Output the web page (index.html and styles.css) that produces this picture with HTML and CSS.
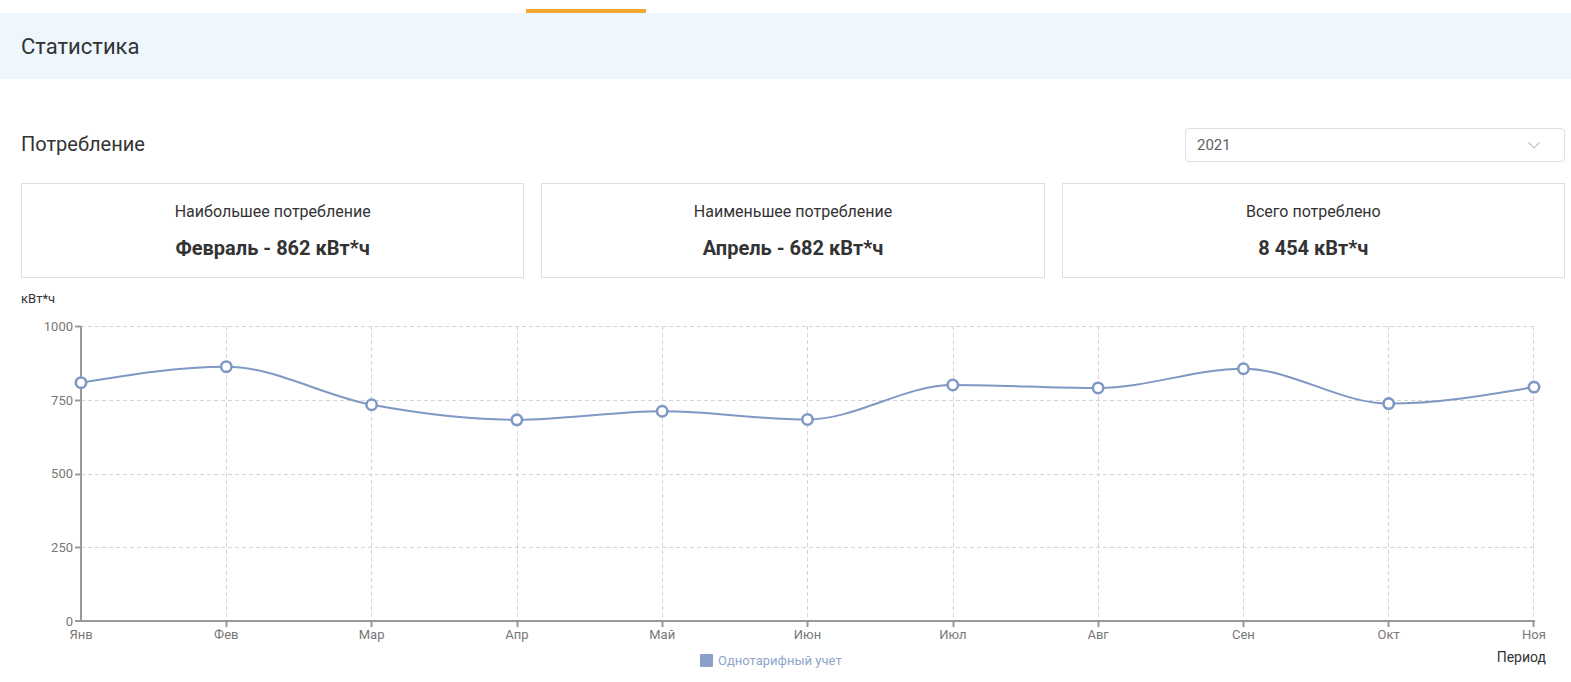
FILE: index.html
```html
<!DOCTYPE html>
<html lang="ru">
<head>
<meta charset="utf-8">
<title>Статистика</title>
<link rel="stylesheet" href="styles.css">
</head>
<body>
<div class="topbar"><div class="tab-indicator"></div></div>
<header class="page-header">Статистика</header>
<main class="content">
  <div class="section-head">
    <h2 class="section-title">Потребление</h2>
    <div class="select">
      <span class="select-value">2021</span>
      <svg class="chevron" width="12" height="7" viewBox="0 0 12 7"><polyline points="0.5,0.5 6,6 11.5,0.5" fill="none" stroke="#c0c4cc" stroke-width="1.2"/></svg>
    </div>
  </div>
  <div class="cards">
    <div class="card">
      <div class="card-label">Наибольшее потребление</div>
      <div class="card-value">Февраль - 862 кВт*ч</div>
    </div>
    <div class="card">
      <div class="card-label">Наименьшее потребление</div>
      <div class="card-value">Апрель - 682 кВт*ч</div>
    </div>
    <div class="card">
      <div class="card-label">Всего потреблено</div>
      <div class="card-value">8 454 кВт*ч</div>
    </div>
  </div>
  <svg class="chart" width="1544" height="404" viewBox="21 278 1544 404">
    <text class="axis-name" x="21" y="303">кВт*ч</text>
    <g class="grid">
      <line x1="81" y1="326.5" x2="1534" y2="326.5"/>
      <line x1="81" y1="400.5" x2="1534" y2="400.5"/>
      <line x1="81" y1="474.5" x2="1534" y2="474.5"/>
      <line x1="81" y1="547.5" x2="1534" y2="547.5"/>
      <line x1="226.5" y1="326" x2="226.5" y2="621"/>
      <line x1="371.5" y1="326" x2="371.5" y2="621"/>
      <line x1="517.5" y1="326" x2="517.5" y2="621"/>
      <line x1="662.5" y1="326" x2="662.5" y2="621"/>
      <line x1="807.5" y1="326" x2="807.5" y2="621"/>
      <line x1="953.5" y1="326" x2="953.5" y2="621"/>
      <line x1="1098.5" y1="326" x2="1098.5" y2="621"/>
      <line x1="1243.5" y1="326" x2="1243.5" y2="621"/>
      <line x1="1388.5" y1="326" x2="1388.5" y2="621"/>
      <line x1="1533.5" y1="326" x2="1533.5" y2="621"/>
    </g>
    <g class="axis">
      <line x1="81" y1="326" x2="81" y2="622"/>
      <line x1="80" y1="621" x2="1535" y2="621"/>
      <line x1="75" y1="326.5" x2="81" y2="326.5"/>
      <line x1="75" y1="400.5" x2="81" y2="400.5"/>
      <line x1="75" y1="474.5" x2="81" y2="474.5"/>
      <line x1="75" y1="547.5" x2="81" y2="547.5"/>
      <line x1="75" y1="621" x2="81" y2="621"/>
      <line x1="226.5" y1="621" x2="226.5" y2="627"/>
      <line x1="371.5" y1="621" x2="371.5" y2="627"/>
      <line x1="517.5" y1="621" x2="517.5" y2="627"/>
      <line x1="662.5" y1="621" x2="662.5" y2="627"/>
      <line x1="807.5" y1="621" x2="807.5" y2="627"/>
      <line x1="953.5" y1="621" x2="953.5" y2="627"/>
      <line x1="1098.5" y1="621" x2="1098.5" y2="627"/>
      <line x1="1243.5" y1="621" x2="1243.5" y2="627"/>
      <line x1="1388.5" y1="621" x2="1388.5" y2="627"/>
      <line x1="1533.5" y1="621" x2="1533.5" y2="627"/>
    </g>
    <g class="y-labels">
      <text x="73" y="330.5">1000</text>
      <text x="73" y="404.5">750</text>
      <text x="73" y="478">500</text>
      <text x="73" y="551.5">250</text>
      <text x="73" y="625.5">0</text>
    </g>
    <g class="x-labels">
      <text x="81" y="638.5">Янв</text>
      <text x="226.3" y="638.5">Фев</text>
      <text x="371.6" y="638.5">Мар</text>
      <text x="516.9" y="638.5">Апр</text>
      <text x="662.2" y="638.5">Май</text>
      <text x="807.5" y="638.5">Июн</text>
      <text x="952.8" y="638.5">Июл</text>
      <text x="1098.1" y="638.5">Авг</text>
      <text x="1243.4" y="638.5">Сен</text>
      <text x="1388.7" y="638.5">Окт</text>
      <text x="1534" y="638.5">Ноя</text>
    </g>
    <path class="series" d="M81,382.64 C129.43,374.68 177.87,366.71 226.3,366.71 C274.73,366.71 323.17,395.91 371.6,404.76 C420.03,413.61 468.47,419.81 516.9,419.81 C565.33,419.81 613.77,411.25 662.2,411.25 C710.63,411.25 759.07,419.51 807.5,419.51 C855.93,419.51 904.37,385 952.8,385 C1001.23,385 1049.67,387.95 1098.1,387.95 C1146.53,387.95 1194.97,368.77 1243.4,368.77 C1291.83,368.77 1340.27,403.58 1388.7,403.58 C1437.13,403.58 1485.57,395.32 1534,387.06"/>
    <g class="points">
      <circle cx="81" cy="382.64" r="5.2"/>
      <circle cx="226.3" cy="366.71" r="5.2"/>
      <circle cx="371.6" cy="404.76" r="5.2"/>
      <circle cx="516.9" cy="419.81" r="5.2"/>
      <circle cx="662.2" cy="411.25" r="5.2"/>
      <circle cx="807.5" cy="419.51" r="5.2"/>
      <circle cx="952.8" cy="385" r="5.2"/>
      <circle cx="1098.1" cy="387.95" r="5.2"/>
      <circle cx="1243.4" cy="368.77" r="5.2"/>
      <circle cx="1388.7" cy="403.58" r="5.2"/>
      <circle cx="1534" cy="387.06" r="5.2"/>
    </g>
    <rect class="legend-mark" x="700" y="654" width="13" height="13" rx="1"/>
    <text class="legend-text" x="718" y="665">Однотарифный учет</text>
    <text class="axis-name period" x="1546" y="662">Период</text>
  </svg>
</main>
</body>
</html>
```
FILE: styles.css
```css
* { box-sizing: border-box; }
html, body { margin: 0; padding: 0; background: #ffffff; }
body {
  font-family: Roboto, "Noto Sans", "Liberation Sans", sans-serif;
  color: #303133;
  width: 1571px;
  height: 682px;
  overflow: hidden;
}
.topbar {
  padding-top: 9px;
  height: 13px;
}
.tab-indicator {
  margin-left: 526px;
  width: 120px;
  height: 4px;
  background: #f5a733;
}
.page-header {
  height: 66px;
  background: #eef6fe;
  padding: 2px 0 0 21px;
  font-size: 22px;
  line-height: 64px;
  color: #333;
}
.content {
  padding: 0 6px 0 21px;
}
.section-head {
  margin-top: 49px;
  display: flex;
  justify-content: space-between;
  align-items: center;
  height: 34px;
}
.section-title {
  margin: 0;
  font-size: 20px;
  font-weight: 400;
  color: #333;
  line-height: 24px;
  position: relative;
  top: -1px;
}
.select {
  width: 380px;
  height: 34px;
  border: 1px solid #dcdfe6;
  border-radius: 4px;
  display: flex;
  align-items: center;
  justify-content: space-between;
  padding: 0 24px 0 11px;
}
.select-value {
  font-size: 15px;
  color: #606266;
}
.chevron { display: block; }
.cards {
  margin-top: 21px;
  display: grid;
  grid-template-columns: repeat(3, 1fr);
  gap: 17px;
}
.card {
  height: 95px;
  border: 1px solid #dcdfe6;
  display: flex;
  flex-direction: column;
  align-items: center;
  justify-content: center;
  gap: 14px;
}
.card-label {
  font-size: 16px;
  line-height: 20px;
  color: #333;
}
.card-value {
  font-size: 20px;
  line-height: 24px;
  font-weight: 700;
  color: #333;
}
.chart {
  display: block;
  font-family: Roboto, "Noto Sans", "Liberation Sans", sans-serif;
}
.grid line {
  stroke: #d4d4d4;
  stroke-width: 1;
  stroke-dasharray: 4 3;
}
.axis line {
  stroke: #999;
  stroke-width: 2;
}
.y-labels text {
  font-size: 13px;
  fill: #777;
  text-anchor: end;
}
.x-labels text {
  font-size: 13px;
  fill: #777;
  text-anchor: middle;
}
.axis-name {
  font-size: 13px;
  fill: #333;
}
.period {
  font-size: 14px;
  text-anchor: end;
}
.series {
  fill: none;
  stroke: #7f98c4;
  stroke-width: 2;
}
.points circle {
  fill: #ffffff;
  stroke: #7f98c4;
  stroke-width: 2.6;
}
.legend-mark { fill: #8aa0c8; }
.legend-text {
  font-size: 13px;
  fill: #8ea5cc;
}
```
